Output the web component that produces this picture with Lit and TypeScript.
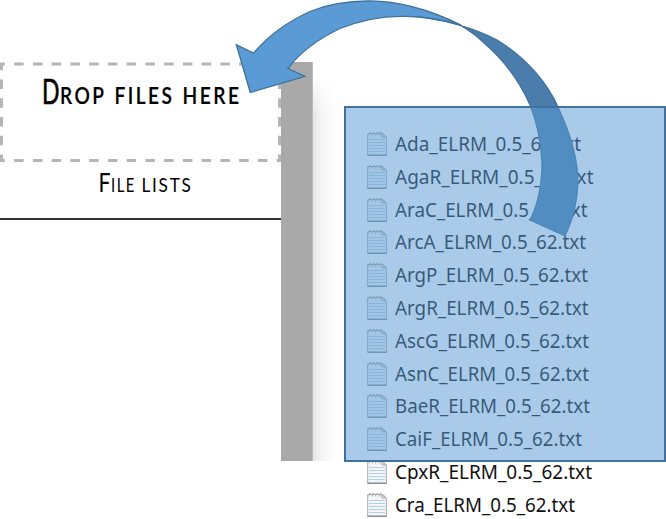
import { LitElement, html, css, svg } from "lit";
import { customElement, property } from "lit/decorators.js";

interface FileEntry { name: string; width: number; }

const FILES: FileEntry[] = [
  { name: "Ada", width: 186 }, { name: "AgaR", width: 198.5 },
  { name: "AraC", width: 192.5 }, { name: "ArcA", width: 191 },
  { name: "ArgP", width: 193 }, { name: "ArgR", width: 193.5 },
  { name: "AscG", width: 194 }, { name: "AsnC", width: 194 },
  { name: "BaeR", width: 195 }, { name: "CaiF", width: 187 },
  { name: "CpxR", width: 197 }, { name: "Cra", width: 180 },
];

@customElement("file-row")
class FileRow extends LitElement {
  @property() name = "";
  @property({ type: Number }) width = 190;

  static styles = css`
    :host { display: flex; height: 32.8px; align-items: flex-start; gap: 8px; }
    svg { display: block; flex: none; overflow: visible; }
    text { font: 19px "Noto Sans", "Open Sans", sans-serif; fill: #111; }
  `;

  render() {
    return html`
      <svg width="20" height="25" viewBox="0 0 20 25">
        <path d="M.7 2.5H16L19.4 6V24.2H.7Z" fill="#f3f5f6" stroke="#a8acae" stroke-width="1"/>
        <path d="M2 8.5H18M2 11.5H18M2 14.5H18M2 17.5H18M2 20.5H18" stroke="#b5d0e3" stroke-width="1"/>
        <path d="M.5 24.3H19.7" stroke="#858b8f" stroke-width="1.3"/>
        <path d="M2 4.5Q2 .8 4 1.2M5.3 4.5Q5.3 .8 7.3 1.2M8.6 4.5Q8.6 .8 10.6 1.2M12 4.5Q12 .8 14 1.2" fill="none" stroke="#aaa" stroke-width="1"/>
        <path d="M14.3 2.2L15 6H19Z" fill="#ddd" stroke="#aaa" stroke-width=".9"/>
      </svg>
      <svg width="200" height="26">
        <text x="0" y="20" textLength=${this.width} lengthAdjust="spacingAndGlyphs">${this.name}_ELRM_0.5_62.txt</text>
      </svg>`;
  }
}

@customElement("drop-panel")
class DropPanel extends LitElement {
  static styles = css`
    :host { display: flex; width: 313px; height: 399px; }
    .content { width: 281px; display: flex; flex-direction: column; }
    .zone { height: 100px; }
    .lists { height: 56px; border-bottom: 2px solid #333; }
    .bar { flex: 1; background: #a9a9a9; border-right: 1px solid #bbb; box-sizing: border-box; }
    svg { display: block; overflow: visible; }
    .dash { fill: none; stroke: #b5b5b5; stroke-width: 3; }
    text { font-family: Lato, sans-serif; fill: #000; }
    .title { font-size: 23px; font-weight: 600; letter-spacing: 3px; stroke: #000; stroke-width: .2; }
    .title .cap { font-size: 34px; font-weight: 400; letter-spacing: 0; stroke-width: .7; }
    .sub { font-size: 19.5px; letter-spacing: 2px; }
    .sub .cap { font-size: 27.5px; letter-spacing: 0; }
  `;

  render() {
    return html`
      <div class="content">
        <div class="zone">
          <svg width="281" height="100">
            <path class="dash" stroke-dasharray="9.5 9.25" stroke-dashoffset="4.6" d="M0 2H281M0 98.5H281"/>
            <path class="dash" stroke-dasharray="9.5 9.25" stroke-dashoffset="2.2" d="M1.5 1V100M279.5 1V100"/>
            <text class="title" y="42"><tspan class="cap" x="42" textLength="17.5" lengthAdjust="spacingAndGlyphs">D</tspan><tspan x="60" textLength="46" lengthAdjust="spacingAndGlyphs">ROP</tspan> <tspan x="114.5" textLength="60" lengthAdjust="spacingAndGlyphs">FILES</tspan> <tspan x="182.5" textLength="59" lengthAdjust="spacingAndGlyphs">HERE</tspan></text>
          </svg>
        </div>
        <div class="lists">
          <svg width="281" height="56">
            <text class="sub" y="30"><tspan class="cap" x="98.5" textLength="12" lengthAdjust="spacingAndGlyphs">F</tspan><tspan x="111" textLength="25" lengthAdjust="spacingAndGlyphs">ILE</tspan> <tspan x="141.5" textLength="51" lengthAdjust="spacingAndGlyphs">LISTS</tspan></text>
          </svg>
        </div>
      </div>
      <div class="bar"></div>`;
  }
}

const arrow = svg`
  <path class="tail" d="M403 16C440 16 480 31 497 40C530 60 549 87 558 107C572 137 578 160 578 183C577 206 572 222 565 236L530 220C539 202 542 184 542 163C541 142 537 122 530 105C519 80 503 59 483 42C478 37 470 31 460 25C442 19 423 16 403 16Z"/>
  <path class="head" d="M250.3 92.5L236.3 44.7L253.5 53.2C267 37 287 22 310 11.5C331 3 352 .8 370 1C399 1 432 11 461 25C438 18 420 16 403 16.3C382 16 361 20 340 28.5C318 39 301 51 288 68.5L305 76.3Z"/>`;

@customElement("app-root")
class AppRoot extends LitElement {
  static styles = css`
    :host { display: block; position: relative; width: 666px; height: 519px; overflow: hidden; background: #fff; }
    .page { display: flex; height: 519px; }
    drop-panel { margin-top: 62px; flex: none; }
    .shadow { width: 23px; height: 386px; margin-top: 75px; flex: none;
      background: linear-gradient(90deg, #e5e5e5, #f5f5f5 40%, #fff);
      mask-image: linear-gradient(transparent, #000 40px); }
    .files { margin: 131px 0 0 31px; flex: none; }
    .arrow { position: absolute; left: 0; top: 0; }
    .tail { fill: #4a7dac; stroke: #41719c; stroke-width: 1.3; }
    .head { fill: #5b9bd5; stroke: #41719c; stroke-width: 1.3; stroke-linejoin: miter; }
    .selection { position: absolute; left: 344px; top: 106px; width: 322px; height: 356px;
      box-sizing: border-box; border: 2px solid #41719c; background: rgba(91,155,213,.52); background-clip: padding-box; }
  `;

  render() {
    return html`
      <div class="page">
        <drop-panel></drop-panel>
        <div class="shadow"></div>
        <div class="files">
          ${FILES.map(f => html`<file-row .name=${f.name} .width=${f.width}></file-row>`)}
        </div>
      </div>
      <svg class="arrow" width="666" height="250">${arrow}</svg>
      <div class="selection"></div>`;
  }
}
